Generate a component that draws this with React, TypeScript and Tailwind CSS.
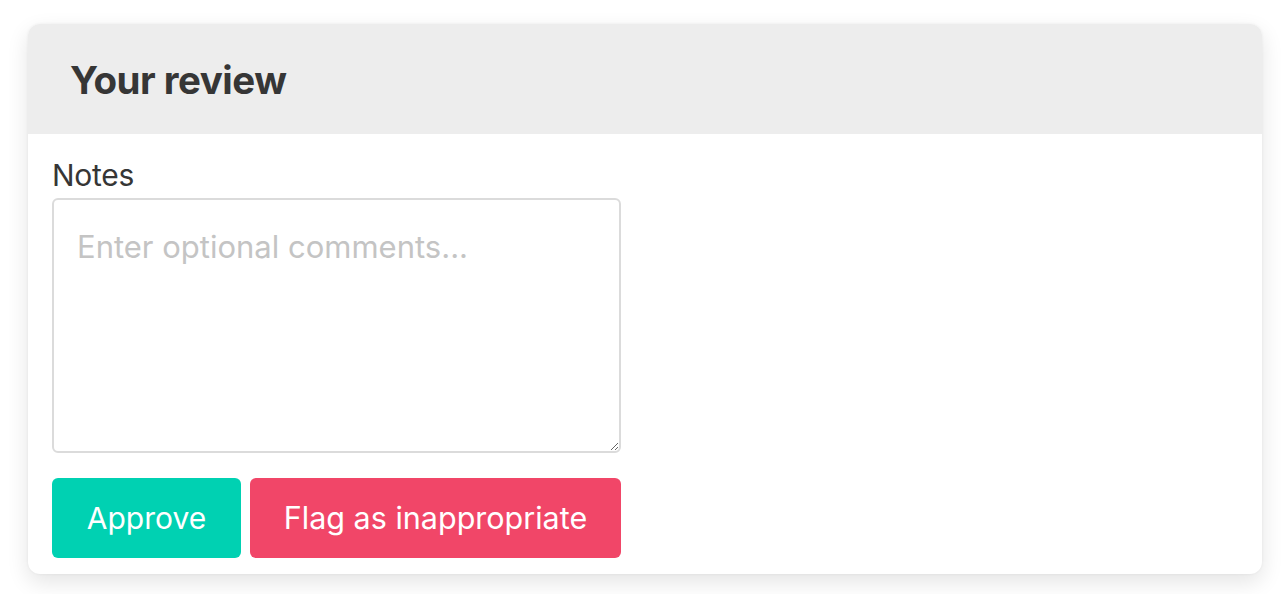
export default function App() {
  return (
    <div className="min-h-[594px] bg-white px-[28px] pt-[24px]" style={{ fontFamily: "Inter, 'Noto Sans', sans-serif" }}>
      <div className="w-[1234px] rounded-[12px] bg-white shadow-[0_8px_22px_rgba(0,0,0,0.11),0_0_3px_rgba(0,0,0,0.06)] overflow-hidden">
        <div className="h-[110px] bg-[#ededed] flex items-center pl-[42px]">
          <h1 className="text-[38.5px] font-bold text-[#363636] tracking-[-0.5px] leading-none pt-[2px]">Your review</h1>
        </div>
        <div className="px-[24px] pt-[21px] pb-[16px]">
          <label className="block text-[30px] tracking-[-0.3px] leading-[40px] text-[#363636] mb-[3px]">Notes</label>
          <textarea
            className="block w-[569px] h-[255px] rounded-[6px] border-2 border-[#dbdbdb] px-[23px] pt-[27px] pb-[13px] text-[31px] leading-[40px] text-[#363636] placeholder:text-[#c4c4c4] outline-none"
            placeholder="Enter optional comments..."
          />
          <div className="flex gap-[9px] mt-[25px]">
            <button className="h-[80px] w-[189px] rounded-[6px] bg-[#00d1b2] text-white text-[30px]">Approve</button>
            <button className="h-[80px] w-[371px] rounded-[6px] bg-[#f14668] text-white text-[30.5px]">Flag as inappropriate</button>
          </div>
        </div>
      </div>
    </div>
  );
}
